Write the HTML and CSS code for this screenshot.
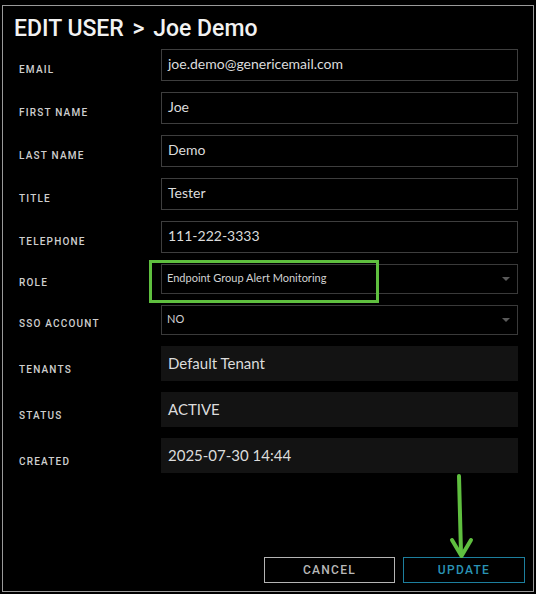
FILE: index.html
```html
<!DOCTYPE html>
<html lang="en">
<head>
<meta charset="utf-8">
<title>Edit User</title>
<link rel="stylesheet" href="styles.css">
</head>
<body>
<div class="modal">
  <h1 class="title">EDIT USER <span class="sep">&gt;</span> Joe Demo</h1>
  <div class="fields">
    <div class="row"><span class="label">EMAIL</span><div class="input">joe.demo@genericemail.com</div></div>
    <div class="row"><span class="label">FIRST NAME</span><div class="input">Joe</div></div>
    <div class="row"><span class="label">LAST NAME</span><div class="input">Demo</div></div>
    <div class="row"><span class="label">TITLE</span><div class="input">Tester</div></div>
    <div class="row"><span class="label">TELEPHONE</span><div class="input">111-222-3333</div></div>
    <div class="row"><span class="label">ROLE</span><div class="select"><span>Endpoint Group Alert Monitoring</span><span class="caret"></span></div></div>
    <div class="row"><span class="label">SSO ACCOUNT</span><div class="select"><span>NO</span><span class="caret"></span></div></div>
    <div class="row"><span class="label">TENANTS</span><div class="readonly">Default Tenant</div></div>
    <div class="row"><span class="label">STATUS</span><div class="readonly">ACTIVE</div></div>
    <div class="row"><span class="label">CREATED</span><div class="readonly">2025-07-30 14:44</div></div>
  </div>
  <div class="actions">
    <button class="btn btn-cancel" type="button">CANCEL</button>
    <button class="btn btn-update" type="button">UPDATE</button>
  </div>
</div>
<svg class="annotation" width="536" height="594" viewBox="0 0 536 594" xmlns="http://www.w3.org/2000/svg">
  <rect x="150.5" y="261.5" width="227" height="40" fill="none" stroke="#5fbf3f" stroke-width="3"/>
  <path d="M459 476 L461 553" fill="none" stroke="#5fbf3f" stroke-width="4" stroke-linecap="round"/>
  <path d="M452 540 L461.5 556 L471 540" fill="none" stroke="#5fbf3f" stroke-width="4" stroke-linecap="round" stroke-linejoin="round"/>
</svg>
</body>
</html>
```
FILE: styles.css
```css
html, body {
  margin: 0;
  padding: 0;
  background: #000;
}
body {
  width: 536px;
  height: 594px;
  overflow: hidden;
  padding-top: 5px;
  padding-left: 2px;
  box-sizing: border-box;
}
.modal {
  width: 532px;
  height: 587px;
  box-sizing: border-box;
  border: 1px solid #9a9a9a;
  background: #000;
  display: flex;
  flex-direction: column;
}
.title {
  margin: 9px 0 7px 11px;
  font-family: Roboto, "Liberation Sans", sans-serif;
  font-weight: 500;
  font-size: 23px;
  line-height: 27px;
  color: #f2f2f2;
  letter-spacing: 0;
}
.sep {
  margin: 0 3px;
}
.fields {
  display: flex;
  flex-direction: column;
  gap: 11px;
  padding: 0 15px 0 16px;
}
.row {
  display: grid;
  grid-template-columns: 142px 1fr;
  align-items: end;
}
.label {
  font-family: Roboto, "Liberation Sans", sans-serif;
  font-weight: 500;
  font-size: 10px;
  line-height: 10px;
  letter-spacing: 1.2px;
  color: #cfcfcf;
  padding-bottom: 6px;
}
.input, .select, .readonly {
  box-sizing: border-box;
  font-family: Lato, "Liberation Sans", sans-serif;
  color: #dcdcdc;
  display: flex;
  align-items: center;
}
.input {
  height: 32px;
  border: 1px solid #3e3e3e;
  padding: 0 6px 3px;
  font-size: 14px;
}
.select {
  height: 30px;
  border: 1px solid #3a3a3a;
  padding: 0 7px 3px 5px;
  font-size: 11px;
  color: #d2d2d2;
  justify-content: space-between;
}
.caret {
  width: 0;
  height: 0;
  border-left: 4px solid transparent;
  border-right: 4px solid transparent;
  border-top: 4px solid #5a5a5a;
  margin-top: 3px;
}
.readonly {
  height: 35px;
  background: #131313;
  padding: 0 7px 2px;
  font-size: 15px;
}
.actions {
  margin-top: auto;
  display: flex;
  justify-content: flex-end;
  gap: 8px;
  padding: 0 8px 8px 0;
}
.btn {
  height: 26px;
  background: #000;
  font-family: Roboto, "Liberation Sans", sans-serif;
  font-weight: 500;
  font-size: 12px;
  letter-spacing: 1.3px;
  padding: 0;
  cursor: pointer;
}
.btn-cancel {
  width: 131px;
  border: 1px solid #b4b4b4;
  color: #b8b8b8;
}
.btn-update {
  width: 122px;
  border: 1px solid #1d7f9e;
  color: #2a93b5;
}
.annotation {
  position: absolute;
  left: 0;
  top: 0;
  pointer-events: none;
}
```
